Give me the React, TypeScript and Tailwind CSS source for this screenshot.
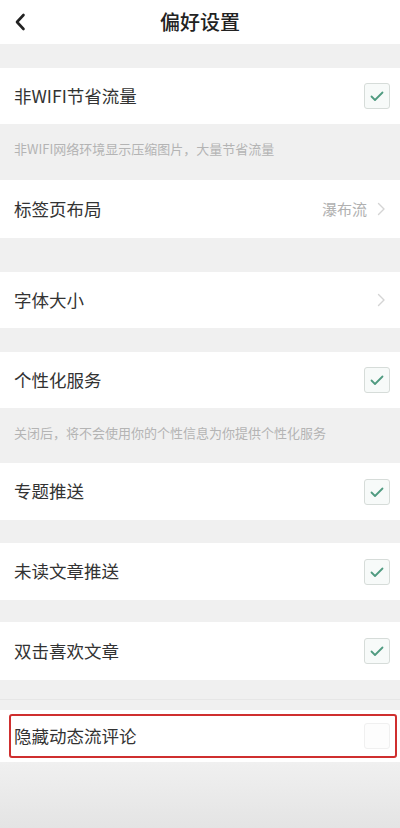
import React from 'react';

const FONT = { fontFamily: '"Noto Sans CJK SC", "Noto Sans", sans-serif' };

const Check: React.FC<{ checked?: boolean }> = ({ checked = true }) => (
  <div
    className={`w-[26px] h-[26px] rounded-[3px] border flex items-center justify-center ${
      checked ? 'border-[#d6dcd9] bg-[#f7faf9]' : 'border-[#f0f0f0] bg-[#fdfdfd]'
    }`}
  >
    {checked && (
      <svg width="16" height="16" viewBox="0 0 16 16" fill="none">
        <path d="M2.5 8.5l3.5 3.5 7.5-7.5" stroke="#4f9b80" strokeWidth="1.8" strokeLinecap="round" strokeLinejoin="round" />
      </svg>
    )}
  </div>
);

const Chevron: React.FC = () => (
  <svg width="9" height="14" viewBox="0 0 9 14" fill="none">
    <path d="M1.5 1.5l5.5 5.5-5.5 5.5" stroke="#d4d4d4" strokeWidth="1.4" strokeLinecap="round" strokeLinejoin="round" />
  </svg>
);

const Row: React.FC<{ label: string; h: string; right?: React.ReactNode }> = ({ label, h, right }) => (
  <div className={`${h} bg-white flex items-center justify-between pl-[14px] pr-[10px]`}>
    <span className="text-[17.5px] text-[#333333]">{label}</span>
    {right}
  </div>
);

export default function App() {
  return (
    <div className="w-[400px] h-[828px] bg-[#f0f0f0] flex flex-col overflow-hidden" style={FONT}>
      {/* header */}
      <div className="h-[44px] bg-white flex items-center">
        <div className="pl-[14px] w-[60px]">
          <svg width="12" height="18" viewBox="0 0 12 18" fill="none">
            <path d="M9.5 2L3 9l6.5 7" stroke="#222222" strokeWidth="2.6" strokeLinecap="round" strokeLinejoin="round" />
          </svg>
        </div>
        <div className="flex-1 text-center text-[20px] font-medium text-[#222222] pr-[60px]">偏好设置</div>
      </div>
      <div className="h-[24px]" />

      <Row label="非WIFI节省流量" h="h-[56px]" right={<Check />} />
      <div className="h-[56px] pl-[14px] pt-[15px] text-[13px] text-[#b4b4b4]">非WIFI网络环境显示压缩图片，大量节省流量</div>

      <Row
        label="标签页布局"
        h="h-[58px]"
        right={
          <div className="flex items-center gap-[10px] pr-[4px]">
            <span className="text-[15px] text-[#b0b0b0]">瀑布流</span>
            <Chevron />
          </div>
        }
      />
      <div className="h-[34px]" />

      <Row label="字体大小" h="h-[56px]" right={<div className="pr-[4px]"><Chevron /></div>} />
      <div className="h-[24px]" />

      <Row label="个性化服务" h="h-[56px]" right={<Check />} />
      <div className="h-[55px] pl-[14px] pt-[15px] text-[13px] text-[#b4b4b4]">关闭后，将不会使用你的个性信息为你提供个性化服务</div>

      <Row label="专题推送" h="h-[57px]" right={<Check />} />
      <div className="h-[23px]" />

      <Row label="未读文章推送" h="h-[57px]" right={<Check />} />
      <div className="h-[22px]" />

      <Row label="双击喜欢文章" h="h-[58px]" right={<Check />} />
      <div className="h-[30px] flex flex-col justify-end">
        <div className="h-px bg-[#e6e6e6] mb-[10px]" />
      </div>

      {/* highlighted row */}
      <div className="h-[52px] bg-white pl-[9px] pr-[3px] py-[4px]">
        <div className="h-full border-2 border-[#cf2f2f] rounded-[3px] flex items-center justify-between pl-[3px] pr-[5px]">
          <span className="text-[17.5px] text-[#333333]">隐藏动态流评论</span>
          <Check checked={false} />
        </div>
      </div>

      <div className="flex-1 bg-gradient-to-b from-[#f0f0f0] to-[#e4e4e4]" />
    </div>
  );
}
